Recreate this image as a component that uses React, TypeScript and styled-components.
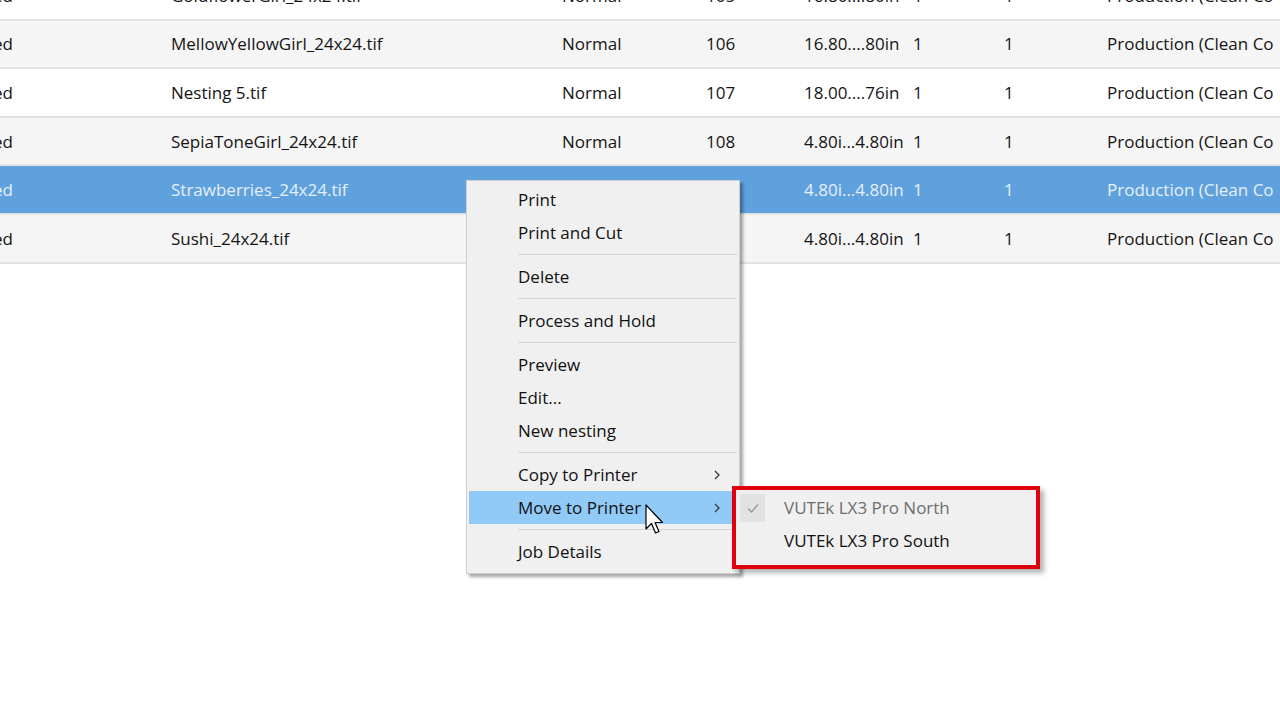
import styled, { createGlobalStyle } from "styled-components";

const GlobalStyle = createGlobalStyle`
  html, body {
    margin: 0;
    padding: 0;
    width: 1280px;
    height: 720px;
    overflow: hidden;
    background: #ffffff;
  }
  body {
    font-family: "Open Sans", "Noto Sans", "Liberation Sans", sans-serif;
  }
`;

const Page = styled.div`
  position: relative;
  width: 1280px;
  height: 720px;
  overflow: hidden;
  background: #ffffff;
`;

const Table = styled.div`
  display: flex;
  flex-direction: column;
  margin-top: -28px;
`;

const Row = styled.div<{ $alt: boolean; $selected: boolean }>`
  display: grid;
  grid-template-columns: 171px 391px 144px 98px 109px 91px 103px 1fr;
  height: 46.6px;
  align-items: center;
  border-bottom: 2px solid #e3e3e3;
  background: ${(p) => (p.$selected ? "#5fa1dd" : p.$alt ? "#f5f5f5" : "#ffffff")};
  color: ${(p) => (p.$selected ? "#e6effa" : "#141414")};
  font-size: 17px;
  white-space: nowrap;
  overflow: hidden;
`;

const Cell = styled.div<{ $shift?: number }>`
  overflow: hidden;
  margin-left: ${(p) => p.$shift ?? 0}px;
`;

const Menu = styled.div`
  position: absolute;
  left: 466px;
  top: 180px;
  width: 268px;
  padding: 2px 2px 5px 2px;
  background: #f0f0f0;
  border: 1px solid #cfcfcf;
  box-shadow: 3px 3px 3px rgba(0, 0, 0, 0.35);
  display: flex;
  flex-direction: column;
`;

const Item = styled.div<{ $active?: boolean }>`
  height: 33px;
  display: flex;
  align-items: center;
  padding-left: 49px;
  padding-right: 16px;
  font-size: 17px;
  color: #111111;
  background: ${(p) => (p.$active ? "#91c9f7" : "transparent")};
`;

const Label = styled.span`
  flex: 1;
  white-space: nowrap;
`;

const Chevron = styled.span`
  width: 8px;
  display: flex;
  align-items: center;
`;

const Separator = styled.div`
  height: 11px;
  display: flex;
  align-items: center;
  padding-left: 49px;

  &::after {
    content: "";
    flex: 1;
    height: 1px;
    background: #d5d5d5;
  }
`;

const SubMenu = styled.div`
  position: absolute;
  left: 732px;
  top: 486px;
  width: 300px;
  padding: 1px 0 8px 0;
  background: #f0f0f0;
  border: 4px solid #e0000c;
  box-shadow: 4px 4px 5px rgba(0, 0, 0, 0.3);
  display: flex;
  flex-direction: column;
`;

const SubItem = styled.div<{ $disabled?: boolean }>`
  height: 33px;
  display: flex;
  align-items: center;
  gap: 19px;
  padding-left: 4px;
  font-size: 17px;
  white-space: nowrap;
  color: ${(p) => (p.$disabled ? "#6e6e6e" : "#111111")};
`;

const CheckBox = styled.div<{ $show?: boolean }>`
  width: 25px;
  height: 28px;
  display: flex;
  align-items: center;
  justify-content: center;
  background: ${(p) => (p.$show ? "#e2e2e2" : "transparent")};
`;

const Pointer = styled.svg`
  position: absolute;
  left: 645px;
  top: 504px;
`;

type Job = {
  status: string;
  name: string;
  type: string;
  num: string;
  size: string;
  a: string;
  b: string;
  printer: string;
};

const jobs: Job[] = [
  { status: "ed", name: "GoldflowerGirl_24x24.tif", type: "Normal", num: "105", size: "16.80....80in", a: "1", b: "1", printer: "Production (Clean Co" },
  { status: "ed", name: "MellowYellowGirl_24x24.tif", type: "Normal", num: "106", size: "16.80....80in", a: "1", b: "1", printer: "Production (Clean Co" },
  { status: "ed", name: "Nesting 5.tif", type: "Normal", num: "107", size: "18.00....76in", a: "1", b: "1", printer: "Production (Clean Co" },
  { status: "ed", name: "SepiaToneGirl_24x24.tif", type: "Normal", num: "108", size: "4.80i...4.80in", a: "1", b: "1", printer: "Production (Clean Co" },
  { status: "ed", name: "Strawberries_24x24.tif", type: "Normal", num: "109", size: "4.80i...4.80in", a: "1", b: "1", printer: "Production (Clean Co" },
  { status: "ed", name: "Sushi_24x24.tif", type: "Normal", num: "110", size: "4.80i...4.80in", a: "1", b: "1", printer: "Production (Clean Co" },
];

const Arrow = () => (
  <svg width="8" height="12" viewBox="0 0 8 12">
    <path d="M2 2 L6 6 L2 10" fill="none" stroke="#3a3a3a" strokeWidth="1.3" />
  </svg>
);

const App = () => {
  return (
    <Page>
      <GlobalStyle />
      <Table>
        {jobs.map((j, i) => (
          <Row key={j.name} $alt={i % 2 === 1} $selected={i === 4}>
            <Cell $shift={-7}>{j.status}</Cell>
            <Cell>{j.name}</Cell>
            <Cell>{j.type}</Cell>
            <Cell>{j.num}</Cell>
            <Cell>{j.size}</Cell>
            <Cell>{j.a}</Cell>
            <Cell>{j.b}</Cell>
            <Cell>{j.printer}</Cell>
          </Row>
        ))}
      </Table>

      <Menu>
        <Item><Label>Print</Label></Item>
        <Item><Label>Print and Cut</Label></Item>
        <Separator />
        <Item><Label>Delete</Label></Item>
        <Separator />
        <Item><Label>Process and Hold</Label></Item>
        <Separator />
        <Item><Label>Preview</Label></Item>
        <Item><Label>Edit...</Label></Item>
        <Item><Label>New nesting</Label></Item>
        <Separator />
        <Item>
          <Label>Copy to Printer</Label>
          <Chevron><Arrow /></Chevron>
        </Item>
        <Item $active>
          <Label>Move to Printer</Label>
          <Chevron><Arrow /></Chevron>
        </Item>
        <Separator />
        <Item><Label>Job Details</Label></Item>
      </Menu>

      <SubMenu>
        <SubItem $disabled>
          <CheckBox $show>
            <svg width="14" height="12" viewBox="0 0 14 12">
              <path d="M2 6.5 L5.5 10 L12 2.5" fill="none" stroke="#9a9a9a" strokeWidth="1.4" />
            </svg>
          </CheckBox>
          VUTEk LX3 Pro North
        </SubItem>
        <SubItem>
          <CheckBox />
          VUTEk LX3 Pro South
        </SubItem>
      </SubMenu>

      <Pointer width="20" height="33" viewBox="0 0 20 33">
        <path
          d="M1 1 L1 25 L6.5 19.5 L10.5 29 L14 27.5 L10 18.5 L17.5 18.5 Z"
          fill="#ffffff"
          stroke="#000000"
          strokeWidth="1.2"
          strokeLinejoin="round"
        />
      </Pointer>
    </Page>
  );
};

export default App;
